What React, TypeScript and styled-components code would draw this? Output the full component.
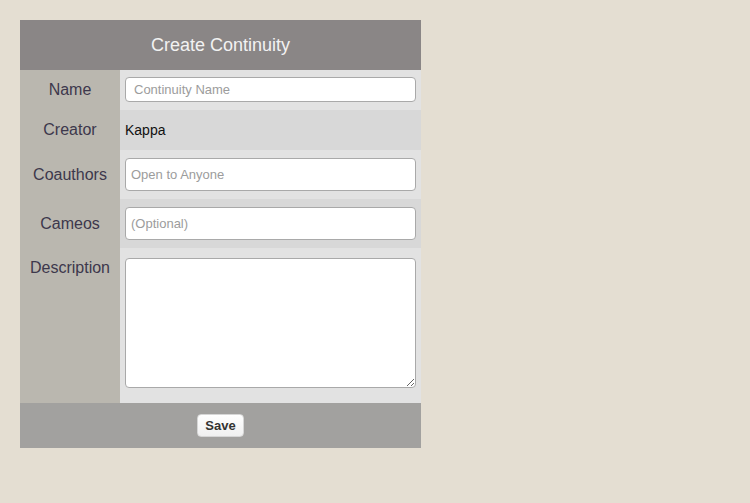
import styled, { createGlobalStyle } from "styled-components";

const GlobalStyle = createGlobalStyle`
  html, body {
    margin: 0;
    padding: 0;
    background: #e4ded2;
    font-family: "Liberation Sans", Arial, sans-serif;
  }
`;

const Page = styled.div`
  padding: 20px;
  min-height: 463px;
`;

const Panel = styled.form`
  width: 401px;
  display: flex;
  flex-direction: column;
`;

const Header = styled.div`
  height: 50px;
  background: #8a8686;
  color: #f2f2f2;
  font-size: 18px;
  display: flex;
  align-items: center;
  justify-content: center;
`;

const Grid = styled.div`
  display: grid;
  grid-template-columns: 100px 301px;
`;

const Label = styled.div<{ $top?: boolean }>`
  background: #bab7af;
  color: #3d384c;
  font-size: 16px;
  display: flex;
  justify-content: center;
  align-items: ${(p) => (p.$top ? "flex-start" : "center")};
  padding-top: ${(p) => (p.$top ? "11px" : "0")};
`;

const Field = styled.div<{ $dark?: boolean; $pad: string }>`
  background: ${(p) => (p.$dark ? "#d8d8d8" : "#e2e2e2")};
  padding: ${(p) => p.$pad};
  display: flex;
  align-items: center;
  box-sizing: border-box;
  min-height: 40px;
`;

const TextInput = styled.input<{ $h: number; $indent: number }>`
  box-sizing: border-box;
  width: 100%;
  height: ${(p) => p.$h}px;
  border: 1px solid #a9a9a9;
  border-radius: 4px;
  background: #fff;
  padding: 0 0 0 ${(p) => p.$indent}px;
  font-family: "Liberation Sans", Arial, sans-serif;
  font-size: 13px;
  outline: none;
  &::placeholder {
    color: #9c9c9c;
  }
`;

const TextArea = styled.textarea`
  box-sizing: border-box;
  width: 100%;
  height: 130px;
  border: 1px solid #a9a9a9;
  border-radius: 4px;
  background: #fff;
  font-family: "Liberation Sans", Arial, sans-serif;
  font-size: 13px;
  display: block;
`;

const Value = styled.span`
  color: #111;
  font-size: 14px;
`;

const Footer = styled.div`
  height: 45px;
  background: #a2a19f;
  display: flex;
  align-items: center;
  justify-content: center;
`;

const SaveButton = styled.button`
  width: 47px;
  height: 23px;
  border: 1px solid #d6d6d6;
  border-radius: 4px;
  background: linear-gradient(#ffffff, #f0f0f0);
  color: #333;
  font-family: "Liberation Sans", Arial, sans-serif;
  font-weight: bold;
  font-size: 13px;
  padding: 0;
`;

export default function App() {
  return (
    <Page>
      <GlobalStyle />
      <Panel onSubmit={(e) => e.preventDefault()}>
        <Header>Create Continuity</Header>
        <Grid>
          <Label>Name</Label>
          <Field $pad="7px 5px 8px">
            <TextInput $h={25} $indent={8} placeholder="Continuity Name" />
          </Field>

          <Label>Creator</Label>
          <Field $dark $pad="0 5px">
            <Value>Kappa</Value>
          </Field>

          <Label>Coauthors</Label>
          <Field $pad="8px 5px">
            <TextInput $h={33} $indent={5} placeholder="Open to Anyone" />
          </Field>

          <Label>Cameos</Label>
          <Field $dark $pad="8px 5px">
            <TextInput $h={33} $indent={5} placeholder="(Optional)" />
          </Field>

          <Label $top>Description</Label>
          <Field $pad="10px 5px 15px">
            <TextArea />
          </Field>
        </Grid>
        <Footer>
          <SaveButton type="submit">Save</SaveButton>
        </Footer>
      </Panel>
    </Page>
  );
}
